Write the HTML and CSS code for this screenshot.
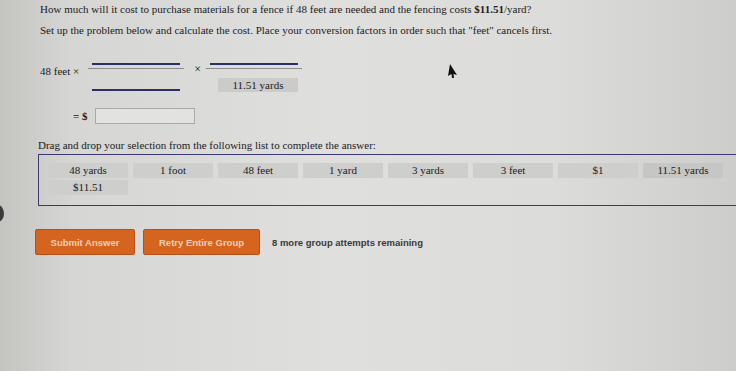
FILE: index.html
```html
<!DOCTYPE html>
<html lang="en">
<head>
    <meta charset="UTF-8">
    <meta name="viewport" content="width=device-width, initial-scale=1.0">
    <title>Unit Conversion</title>
    <link rel="stylesheet" href="styles.css">
</head>
<body>
    <div class="page">
        <p class="question">How much will it cost to purchase materials for a fence if 48 feet are needed and the fencing costs <b>$11.51</b>/yard?</p>
        <p class="question second">Set up the problem below and calculate the cost. Place your conversion factors in order such that "feet" cancels first.</p>

        <div class="setup">
            <span class="given">48 feet &times;</span>
            <div class="fraction">
                <div class="slot"></div>
                <div class="bar"></div>
                <div class="slot low"></div>
            </div>
            <span class="times">&times;</span>
            <div class="fraction">
                <div class="slot"></div>
                <div class="bar"></div>
                <div class="filled">11.51 yards</div>
            </div>
        </div>

        <div class="result">
            <span>= $</span>
            <input type="text" class="answer">
        </div>

        <p class="prompt">Drag and drop your selection from the following list to complete the answer:</p>
        <div class="choices">
            <div class="tiles">
                <div class="tile">48 yards</div>
                <div class="tile">1 foot</div>
                <div class="tile">48 feet</div>
                <div class="tile">1 yard</div>
                <div class="tile">3 yards</div>
                <div class="tile">3 feet</div>
                <div class="tile">$1</div>
                <div class="tile dark">11.51 yards</div>
                <div class="tile">$11.51</div>
            </div>
        </div>

        <div class="actions">
            <button class="btn submit">Submit Answer</button>
            <button class="btn retry">Retry Entire Group</button>
            <span class="attempts">8 more group attempts remaining</span>
        </div>
    </div>

    <!-- mouse pointer and screen edge -->
    <svg class="pointer" width="12" height="16" viewBox="0 0 12 16">
        <path d="M4 1 L11 12 L7.5 11 L8 15 L6 15 L5.5 11 L2 13 Z" fill="#111"/>
    </svg>
    <div class="edge"></div>
</body>
</html>
```

FILE: styles.css
```css
body {
    margin: 0;
    padding: 0;
    width: 736px;
    height: 371px;
    overflow: hidden;
    font-family: "Liberation Serif", "Times New Roman", serif;
    font-size: 11px;
    color: #1b1b1b;
    background: linear-gradient(90deg, #c4c4c1 0%, #d6d6d4 10%, #dfdfde 45%, #dcdcdb 75%, #cdcdcc 100%);
    position: relative;
}

.page {
    padding: 3px 0 0 40px;
}

.question {
    margin: 0;
    line-height: 13px;
}

.question.second {
    margin-top: 8px;
}

.setup {
    display: flex;
    align-items: flex-start;
    margin-top: 15px;
}

.given {
    line-height: 13px;
    margin-top: 13px;
    margin-right: 9px;
}

.times {
    line-height: 13px;
    font-size: 12px;
    margin: 11px 5px 0 10px;
}

.fraction {
    display: flex;
    flex-direction: column;
    align-items: center;
    width: 96px;
}

.slot {
    width: 88px;
    height: 11px;
    border-bottom: 2px solid #2b2f66;
}

.slot.low {
    height: 13px;
    margin-top: 7px;
}

.bar {
    width: 96px;
    height: 1px;
    margin-top: 3px;
    background: #8d8d8d;
}

.filled {
    width: 80px;
    height: 14px;
    line-height: 14px;
    margin-top: 9px;
    margin-left: 8px;
    text-align: center;
    background: #cbcbca;
}

.result {
    display: flex;
    align-items: center;
    margin: 16px 0 0 33px;
}

.result span {
    margin-right: 7px;
    font-weight: bold;
}

.answer {
    width: 98px;
    height: 14px;
    padding: 0;
    border: 1px solid #a9a9a9;
    background: #e2e2e1;
}

.prompt {
    margin: 15px 0 0 -2px;
    line-height: 13px;
}

.choices {
    margin: 2px 0 0 -2px;
    width: 698px;
    height: 52px;
    border-top: 1px solid #3c3a74;
    border-bottom: 1px solid #3c3a74;
    border-left: 1px solid #3c3a74;
    padding: 8px 0 0 9px;
    box-sizing: border-box;
}

.tiles {
    display: flex;
    flex-wrap: wrap;
    gap: 2px 5px;
    width: 690px;
}

.tile {
    width: 80px;
    height: 15px;
    line-height: 15px;
    text-align: center;
    background: #cececd;
}

.tile.dark {
    background: #c6c6c5;
}

.actions {
    display: flex;
    align-items: center;
    margin: 23px 0 0 -5px;
}

.btn {
    height: 26px;
    border: 1px solid #b4501a;
    border-radius: 2px;
    background: #d5641f;
    color: #f1cfb5;
    font-family: "Liberation Sans", Arial, sans-serif;
    font-weight: bold;
    font-size: 9.5px;
    padding: 0;
    margin-right: 8px;
}

.submit {
    width: 100px;
}

.retry {
    width: 117px;
    margin-right: 12px;
}

.attempts {
    font-family: "Liberation Sans", Arial, sans-serif;
    font-weight: bold;
    font-size: 9.5px;
    color: #3a3a3a;
}

.pointer {
    position: absolute;
    left: 446px;
    top: 63px;
}

.edge {
    position: absolute;
    left: -9px;
    top: 205px;
    width: 13px;
    height: 17px;
    border-radius: 50%;
    background: #3a3a3a;
}
```
